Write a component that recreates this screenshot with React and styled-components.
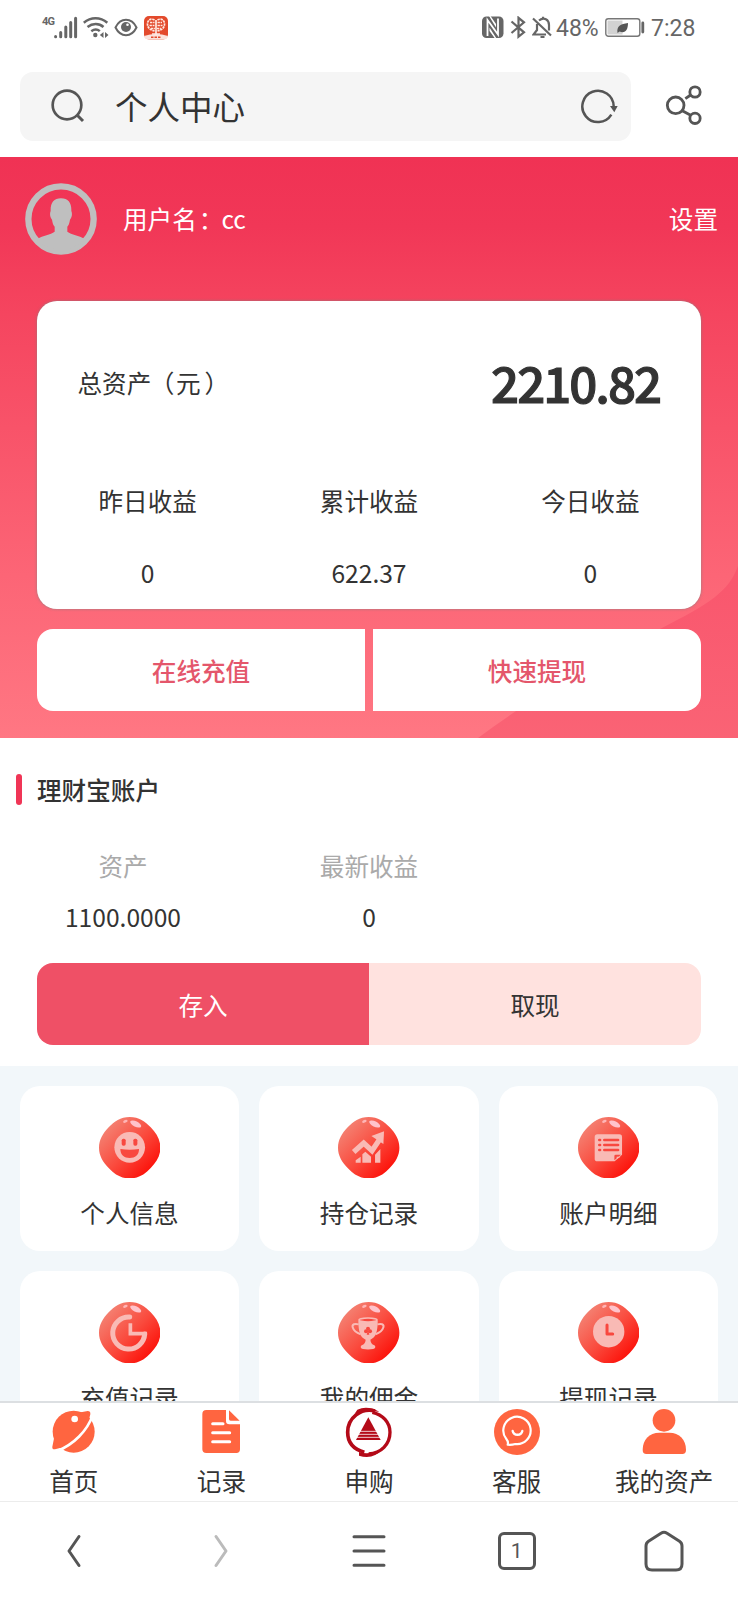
import React from 'react'
import styled, { createGlobalStyle } from 'styled-components'

const GlobalStyle = createGlobalStyle`
  * {
    box-sizing: border-box;
  }
  body {
    margin: 0;
    background: #fff;
    color: #333;
    font-family: "Noto Sans CJK SC", sans-serif;
    font-size: 24.6px;
  }
  svg {
    display: block;
    flex-shrink: 0;
  }
`

const Screen = styled.div`
  display: flex;
  flex-direction: column;
  width: 738px;
  height: 1600px;
  overflow: hidden;
`

/* phone status bar */

const StatusBar = styled.div`
  display: flex;
  justify-content: space-between;
  flex-shrink: 0;
  height: 56px;
  padding: 16px 43px 0 42px;
  color: #666;
  font-family: Roboto, sans-serif;
  font-size: 23px;
  line-height: 25px;
`

const StatusGroup = styled.div`
  display: flex;
  align-items: flex-start;
  height: 24px;
`

const Network = styled.span`
  width: 12px;
  font-size: 11px;
  font-weight: 700;
  line-height: 12px;
  letter-spacing: -0.8px;
`

const StatusText = styled.span`
  width: ${({ $width }) => $width}px;
  margin-left: ${({ $left }) => $left}px;
  white-space: nowrap;
`

const StatusSvg = styled.svg`
  margin-left: ${({ $left }) => $left || 0}px;
`

/* browser address bar */

const AddressBar = styled.div`
  display: flex;
  align-items: center;
  flex-shrink: 0;
  height: 101px;
  padding: 0 34px 0 20px;
`

const AddressField = styled.div`
  display: flex;
  align-items: center;
  width: 611px;
  height: 69px;
  margin-right: 34px;
  padding: 0 13px 2px 29.5px;
  border-radius: 13px;
  background: #f5f5f5;
`

const PageName = styled.div`
  flex: 1;
  margin-left: 29.5px;
  font-size: 32.5px;
  line-height: 60px;
`

const ShareIcon = styled.svg`
  margin-bottom: 3px;
`

/* page */

const Page = styled.main`
  flex: 1;
  min-height: 0;
  overflow: hidden;
`

const Hero = styled.section`
  position: relative;
  height: 580.5px;
  padding: 25.5px 37px 0;
  background: linear-gradient(#f03254 0%, #f13757 12%, #f5455f 27%, #fc6576 72%, #ff7783 100%);
`

const HeroCurve = styled.svg`
  position: absolute;
  right: 0;
  bottom: 0;
`

const UserRow = styled.div`
  display: flex;
  align-items: center;
  height: 72px;
  margin: 0 -17px 0 -12px;
  color: #fff;
`

const UserName = styled.div`
  flex: 1;
  margin: 0 0 1px 26px;
`

const Settings = styled.div`
  margin-bottom: 1px;
`

/* full-width punctuation, nudged towards the centre of its box */
const Punct = styled.span`
  margin-left: ${({ $shift }) => $shift}px;
  margin-right: ${({ $shift }) => -$shift}px;
`

const AssetCard = styled.div`
  position: relative;
  height: 308px;
  margin-top: 46.5px;
  border-radius: 20px;
  background: #fff;
  box-shadow: 0 0 3px rgba(130, 130, 130, 0.85);
`

const TotalRow = styled.div`
  display: flex;
  align-items: center;
  justify-content: space-between;
  height: 163px;
  padding: 0 41px 2px 40.5px;
  white-space: nowrap;
`

const TotalValue = styled.div`
  margin-bottom: 1px;
  font-size: 49.2px;
  font-weight: 500;
  letter-spacing: -2px;
  -webkit-text-stroke: 1.1px #333;
`

const Stats = styled.div`
  display: grid;
  grid-template-columns: repeat(3, 1fr);
  text-align: center;
  line-height: ${({ $line }) => $line}px;
`

const StatLabel = styled.div`
  color: ${({ $muted }) => ($muted ? '#aaa' : '#333')};
`

const ButtonRow = styled.div`
  position: relative;
  display: flex;
  gap: ${({ $gap }) => $gap || 0}px;
  height: 82px;
  margin-top: 20px;
`

const colors = {
  plain: { bg: '#fff', text: '#e4566b' },
  primary: { bg: '#ef5066', text: '#fff' },
  light: { bg: '#ffe2df', text: '#333' },
}

const Button = styled.button`
  flex: 1;
  padding: 0 0 1px;
  border: 0;
  background: ${({ $kind }) => colors[$kind].bg};
  color: ${({ $kind }) => colors[$kind].text};
  font: inherit;
  font-weight: ${({ $kind }) => ($kind === 'plain' ? 500 : 400)};
  &:first-child {
    border-radius: 16px 0 0 16px;
  }
  &:last-child {
    border-radius: 0 16px 16px 0;
  }
`

const Account = styled.section`
  height: 328.5px;
  padding-top: 36px;
  background: #fff;
  ${ButtonRow} {
    margin: 20.5px 37px 0;
  }
`

const SectionTitle = styled.h2`
  display: flex;
  align-items: center;
  height: 31px;
  margin: 0 0 35px 16px;
  font-size: 24.6px;
  font-weight: 500;
  line-height: 30px;
  &::before {
    content: "";
    width: 6px;
    height: 31px;
    margin-right: 15px;
    border-radius: 3px;
    background: #f03556;
  }
`

const Menu = styled.section`
  display: grid;
  grid-template-columns: repeat(3, 1fr);
  grid-auto-rows: 164.4px;
  gap: 20.4px;
  padding: 20.4px 20px;
  background: #f2f7fa;
`

const MenuItem = styled.div`
  display: flex;
  flex-direction: column;
  align-items: center;
  padding-top: 30.5px;
  border-radius: 20px;
  background: #fff;
`

const MenuLabel = styled.div`
  margin-top: 16px;
  line-height: 36px;
`

/* bottom bars */

const TabBar = styled.nav`
  display: grid;
  grid-template-columns: repeat(5, 1fr);
  flex-shrink: 0;
  height: 101px;
  padding-top: 4px;
  border-top: 2px solid #dcdfe2;
  border-bottom: 1px solid #ececec;
  background: #fff;
`

const Tab = styled.div`
  display: flex;
  flex-direction: column;
  align-items: center;
  line-height: 36px;
  svg {
    margin-bottom: 4px;
  }
`

const BrowserBar = styled.nav`
  display: grid;
  grid-template-columns: repeat(5, 1fr);
  place-items: center;
  flex-shrink: 0;
  height: 98px;
`

const WindowCount = styled.div`
  width: 38px;
  height: 38px;
  border: 3px solid #555;
  border-radius: 6px;
  color: #555;
  font-family: Roboto, sans-serif;
  font-size: 21px;
  line-height: 32px;
  text-align: center;
`

const Blob = ({ id, children }) => (
  <svg width="61.4" height="61.4" viewBox="0 0 184 184">
    <defs>
      <linearGradient id={id} x1="0.12" y1="0.15" x2="0.82" y2="0.85">
        <stop offset="0" stopColor="#f48273" />
        <stop offset="0.55" stopColor="#fa4a3d" />
        <stop offset="1" stopColor="#fc150d" />
      </linearGradient>
    </defs>
    <path
      fill={`url(#${id})`}
      d="M92 0c28 0 46 13 63 31s29 37 29 61-12 43-29 61-35 31-63 31-46-13-63-31S0 116 0 92s12-43 29-61S64 0 92 0z"
    />
    <ellipse cx="110" cy="21" rx="18" ry="8" fill="#ffc3cb" transform="rotate(26 110 21)" />
    <ellipse cx="79" cy="13" rx="7" ry="4" fill="#ffb5b5" transform="rotate(-20 79 13)" />
    {children}
  </svg>
)

const pale = '#f9bab5'
const hole = '#f8483f'

const menu = [
  {
    label: '个人信息',
    glyph: (
      <>
        <circle cx="92" cy="91" r="46" fill={pale} />
        <rect x="68" y="65" width="12" height="21" rx="5" fill={hole} />
        <rect x="103" y="65" width="12" height="21" rx="5" fill={hole} />
        <path d="M64 96q28 4 56 0c0 18-12 27-28 27s-28-9-28-27z" fill={hole} />
      </>
    ),
  },
  {
    label: '持仓记录',
    glyph: (
      <g fill={pale}>
        <path d="M47 105l30-27 25 23 23-34" fill="none" stroke={pale} strokeWidth="16" />
        <path d="M100 57l38-14-2 38z" />
        <path d="M53 137v-7l15-11v18zM73 137v-25l9-8 17 15v18zM111 137v-24l16-17v41z" />
      </g>
    ),
  },
  {
    label: '账户明细',
    glyph: (
      <>
        <path d="M58 52h66q8 0 8 8v53l-22 20H58q-8 0-8-8V60q0-8 8-8z" fill={pale} />
        <path d="M109 130v-13q0-4 4-4h16z" fill={hole} />
        <path d="M116 126v-7h12z" fill={pale} />
        <path d="M64 69h2M79 69h41M64 84h2M79 84h41M64 99h2M79 99h41" stroke={hole} strokeWidth="8" strokeLinecap="round" />
      </>
    ),
  },
  {
    label: '充值记录',
    glyph: (
      <>
        <path d="M92 45a48 48 0 1 0 45 51" fill="none" stroke={pale} strokeWidth="15" strokeLinecap="round" />
        <path d="M94 64v31h50" fill="none" stroke={pale} strokeWidth="11" />
      </>
    ),
  },
  {
    label: '我的佣金',
    glyph: (
      <>
        <path d="M61 56c0 32 5 49 22 57-1 9-4 13-12 17-5 4-3 10 4 11 10 2 20 2 30 0 7-1 9-7 4-11-8-4-11-8-12-17 17-8 22-25 22-57z" fill={pale} />
        <ellipse cx="90" cy="54" rx="27" ry="6" fill={hole} stroke={pale} strokeWidth="5" />
        <path d="M62 67c-11-3-21-1-18 9 3 11 10 16 24 21M118 67c11-3 21-1 18 9-3 11-10 16-24 21" fill="none" stroke={pale} strokeWidth="6" />
        <g fill={hole}>
          <circle cx="90" cy="80" r="6" />
          <circle cx="84" cy="88" r="6" />
          <circle cx="96" cy="88" r="6" />
          <path d="M90 84l4 14h-8z" />
        </g>
      </>
    ),
  },
  {
    label: '提现记录',
    glyph: (
      <>
        <circle cx="92" cy="89" r="47" fill={pale} />
        <path d="M87 69v27h17" fill="none" stroke={hole} strokeWidth="9" strokeLinecap="round" strokeLinejoin="round" />
      </>
    ),
  },
]

const tabs = [
  {
    label: '首页',
    icon: (
      <g transform="translate(-147 -51)">
        <circle cx="221" cy="125" r="63" fill="#ff6540" />
        <path fill="#ff6540" d="M235 68l28-5q9 0 8 10l-6 22zM163 140l-6 30q-1 9 8 8l24-6z" />
        <path fill="none" stroke="#fff" strokeWidth="8" d="M279 74C262 122 222 164 168 185" />
        <circle cx="224" cy="87" r="10" fill="#fff" />
      </g>
    ),
  },
  {
    label: '记录',
    icon: (
      <g transform="translate(-590 -51)">
        <path fill="#ff6540" d="M621 60h59v33q0 10 10 10h32v75q0 11-11 11h-90q-12 0-12-11V72q0-12 12-12z" />
        <path fill="#ff6540" d="M689 61l32 31h-27q-5 0-5-5z" />
        <path d="M640 101h31M640 128h51M640 155h51" stroke="#fff" strokeWidth="9" strokeLinecap="round" />
      </g>
    ),
  },
  {
    label: '申购',
    icon: (
      <g transform="translate(-1033 -49)">
        <path fill="none" stroke="#b40a18" strokeWidth="11" d="M1126 61C1084 50 1044 82 1044 125c0 30 17 51 50 60" />
        <path fill="none" stroke="#b40a18" strokeWidth="10" d="M1118 65c31 7 53 30 53 60 0 36-27 63-64 65" />
        <path fill="#b40a18" d="M1073 57q30-14 66 6l-24-1q-30-4-50 7zM1078 184q32 12 72-11-30 37-72 22z" />
        <path fill="#b40a18" d="M1106 80l37 68h-74z" />
        <path d="M1070 122h72M1070 131h72M1070 140h76" stroke="#fff" strokeWidth="2.4" />
      </g>
    ),
  },
  {
    label: '客服',
    icon: (
      <g transform="translate(-372 -51)">
        <circle cx="447" cy="126" r="69" fill="#ff6540" />
        <path d="M415 147a41 41 0 1 1 27 15c-7 2-15 3-23 2 2-6 1-11-4-17z" fill="none" stroke="#fff" strokeWidth="6.5" strokeLinejoin="round" />
        <path d="M434 123c3 15 26 15 29 0" fill="none" stroke="#fff" strokeWidth="7" strokeLinecap="round" />
      </g>
    ),
  },
  {
    label: '我的资产',
    icon: (
      <g transform="translate(-813 -51)" fill="#ff6540">
        <circle cx="888" cy="91" r="34" />
        <path d="M824 180c0-31 20-52 50-52h30c30 0 50 21 50 52q0 12-11 12H835q-11 0-11-12z" />
      </g>
    ),
  },
]

const stats = [
  ['昨日收益', '0'],
  ['累计收益', '622.37'],
  ['今日收益', '0'],
]

function PhoneStatus() {
  return (
    <StatusBar>
      <StatusGroup>
        <Network>4G</Network>
        <StatusSvg width="24" height="24" viewBox="0 0 24 24" stroke="#666" strokeWidth="3" strokeLinecap="round">
          <path d="M1.600 20.500v.3M6.700 16.500v4.300M11.800 11v9.800M16.700 6.500v14.300M21.600 2.300v18.500" />
        </StatusSvg>
        <StatusSvg $left={5} width="26" height="24" viewBox="0 0 26 24" fill="none" stroke="#666" strokeWidth="2.5">
          <path d="M.8 6.800c7-6 16.500-6 23.500 0M4.500 11c5-4 11.500-4 16 0M8.300 15.200c3-2.300 6-2.300 8.500 0" />
          <circle cx="12.300" cy="19" r="2.200" fill="#666" stroke="none" />
          <path d="M20.500 16v6l-3.700-3zM22 16v6l3.500-3z" fill="#666" stroke="none" />
        </StatusSvg>
        <StatusSvg $left={5} width="24" height="24" viewBox="0 0 23 24">
          <path d="M1 11.500C6 1.300 17 1.300 22 11.500 17 21.700 6 21.700 1 11.500z" fill="none" stroke="#666" strokeWidth="2" />
          <circle cx="11.500" cy="11" r="5" fill="#666" />
          <circle cx="13" cy="8.800" r="1.300" fill="#fff" />
        </StatusSvg>
        <StatusSvg $left={6} width="24" height="24" viewBox="0 0 24 24">
          <rect width="24" height="23.500" rx="5" fill="#e34a2c" />
          <path d="M0 20q12-4 24 0-.5 3.500-5 3.500H5Q.5 23.500 0 20z" fill="#fbe3dc" />
          <g stroke="#ffe9e2" strokeWidth="1.700" fill="none" strokeDasharray="2.400 .7">
            <path d="M10.500 4C7 2 3.500 4 3.500 8s3 6 7 7M13.500 4C17 2 20.500 4 20.500 8s-3 6-7 7" />
            <path d="M6 6.500h4.500M5.500 9.500h5M7 12.500h4M13.500 6.500H18M13.500 9.500h5M13 12.500h4" />
            <path d="M12 4v15M8 18h8" strokeDasharray="none" />
          </g>
          <path d="M7 21.300h10" stroke="#e34a2c" strokeWidth="1.500" strokeDasharray="2.500 1" />
        </StatusSvg>
      </StatusGroup>
      <StatusGroup>
        <StatusSvg width="22" height="23" viewBox="0 0 22 23">
          <rect y=".5" width="21.500" height="21.500" rx="4.500" fill="#666" />
          <path d="M5.500 20V4l10.500 14.500V2.500" fill="none" stroke="#fff" strokeWidth="1.800" />
          <path d="M7 0h1.500L14 8v3.500zM14.500 22.500H13L7.500 15v-3.500z" fill="#fff" />
        </StatusSvg>
        <StatusSvg $left={6} width="16" height="23" viewBox="0 0 16 23" fill="none" stroke="#666" strokeWidth="2.2">
          <path d="M1.500 5.500L14 16.300l-5.500 4.400V1.800L14 6.300 1.500 17" />
        </StatusSvg>
        <StatusSvg $left={6} width="21" height="23" viewBox="0 0 21 23" fill="none" stroke="#666" strokeWidth="2.2">
          <path d="M1 2.500l18 17M5 8v6l-3.500 4.500H14M7 4.500c5-4 10-1 10 4.500v5.500M8.500 21h4M11 3V.8" />
        </StatusSvg>
        <StatusText $left={3} $width={42}>48%</StatusText>
        <StatusSvg $left={7} width="40" height="24" viewBox="0 0 40 24">
          <rect x=".8" y="2.800" width="34" height="17.500" rx="2.500" fill="#fff" stroke="#777" strokeWidth="1.400" />
          <path d="M2.500 4.500h15v14h-15z" fill="#d2d2d2" />
          <path d="M12.500 17c-1-7 3-9 10.500-10 0 7-3 11-8.500 8.500z" fill="#555" />
          <path d="M37.800 7v9" stroke="#666" strokeWidth="2.800" strokeLinecap="round" />
        </StatusSvg>
        <StatusText $left={6} $width={44}>7:28</StatusText>
      </StatusGroup>
    </StatusBar>
  )
}

function Address() {
  return (
    <AddressBar>
      <AddressField>
        <svg width="36" height="36" viewBox="0 0 108 108" fill="none" stroke="#555" strokeWidth="8">
          <circle cx="51" cy="51" r="43" />
          <path d="M81 81l18 18" strokeWidth="9" />
        </svg>
        <PageName>个人中心</PageName>
        <svg width="38" height="36" viewBox="0 0 114 108" fill="none" stroke="#555" strokeWidth="7.5">
          <path d="M94 80A47 47 0 1 1 101 54" />
          <path d="M90 54h23l-10 19z" fill="#555" stroke="none" />
        </svg>
      </AddressField>
      <ShareIcon width="37" height="40" viewBox="0 0 111 120" fill="none" stroke="#555" strokeWidth="8.5">
        <circle cx="32" cy="61" r="25" />
        <circle cx="90" cy="21" r="15.500" />
        <circle cx="90" cy="100" r="15.500" />
        <path d="M61 41l16-11M52 77l25 14" />
      </ShareIcon>
    </AddressBar>
  )
}

function App() {
  return (
    <>
      <GlobalStyle />
      <Screen>
        <PhoneStatus />
        <Address />
        <Page>
          <Hero>
            <HeroCurve width="260" height="172" viewBox="0 0 260 172">
              <defs>
                <linearGradient id="curve" x1="0" y1="0" x2="0" y2="1">
                  <stop offset="0" stopColor="#f9566d" />
                  <stop offset="1" stopColor="#fa6375" />
                </linearGradient>
              </defs>
              <path d="M260 0c-9 25-27 37-78 63C130 90 58 128 0 172h260z" fill="url(#curve)" />
            </HeroCurve>
            <UserRow>
              <svg width="72" height="72" viewBox="0 0 216 216" fill="#bfbfbf">
                <circle cx="108" cy="108" r="98" fill="none" stroke="#bfbfbf" strokeWidth="19" />
                <path d="M108 46c22 0 32 14 31 38 4 10 1 20-4 26-2 11-4 17-8 21v15c12 9 36 12 51 21l-8 14a98 98 0 0 1-124 0l-8-14c15-9 39-12 51-21v-15c-4-4-6-10-8-21-5-6-8-16-4-26-1-24 9-38 31-38z" />
                <path d="M34 170q74 60 148 0l-16 26q-58 34-116 0z" />
              </svg>
              <UserName>
                用户名<Punct $shift={2}>：</Punct>cc
              </UserName>
              <Settings>设置</Settings>
            </UserRow>
            <AssetCard>
              <TotalRow>
                <div>
                  总资产<Punct $shift={-1.5}>（</Punct>元<Punct $shift={4}>）</Punct>
                </div>
                <TotalValue>2210.82</TotalValue>
              </TotalRow>
              <Stats $line={72}>
                {stats.map(([label, value]) => (
                  <div key={label}>
                    <StatLabel>{label}</StatLabel>
                    <div>{value}</div>
                  </div>
                ))}
              </Stats>
            </AssetCard>
            <ButtonRow $gap={8}>
              <Button $kind="plain">在线充值</Button>
              <Button $kind="plain">快速提现</Button>
            </ButtonRow>
          </Hero>
          <Account>
            <SectionTitle>理财宝账户</SectionTitle>
            <Stats $line={51.5}>
              <div>
                <StatLabel $muted>资产</StatLabel>
                <div>1100.0000</div>
              </div>
              <div>
                <StatLabel $muted>最新收益</StatLabel>
                <div>0</div>
              </div>
            </Stats>
            <ButtonRow>
              <Button $kind="primary">存入</Button>
              <Button $kind="light">取现</Button>
            </ButtonRow>
          </Account>
          <Menu>
            {menu.map(({ label, glyph }, i) => (
              <MenuItem key={label}>
                <Blob id={`blob${i}`}>{glyph}</Blob>
                <MenuLabel>{label}</MenuLabel>
              </MenuItem>
            ))}
          </Menu>
        </Page>
        <TabBar>
          {tabs.map(({ label, icon }) => (
            <Tab key={label}>
              <svg width="50" height="51" viewBox="0 0 150 153">{icon}</svg>
              {label}
            </Tab>
          ))}
        </TabBar>
        <BrowserBar>
          <svg width="16" height="34" viewBox="0 0 16 34" fill="none" stroke="#555" strokeWidth="3" strokeLinecap="round" strokeLinejoin="round">
            <path d="M13 2.500L3 17l10 14.500" />
          </svg>
          <svg width="16" height="34" viewBox="0 0 16 34" fill="none" stroke="#bbb" strokeWidth="3" strokeLinecap="round" strokeLinejoin="round">
            <path d="M3 2.500L13 17 3 31.500" />
          </svg>
          <svg width="34" height="34" viewBox="0 0 34 34" stroke="#555" strokeWidth="3" strokeLinecap="round">
            <path d="M2 2.700h30M2 17h30M2 31.300h30" />
          </svg>
          <WindowCount>1</WindowCount>
          <svg width="40" height="42" viewBox="0 0 40 42" fill="none" stroke="#555" strokeWidth="3" strokeLinejoin="round">
            <path d="M17 3.200q3-1.800 6 0l12.500 8q2.500 1.700 2.500 4.800V34q0 6-6 6H8q-6 0-6-6V16q0-3.100 2.500-4.800z" />
          </svg>
        </BrowserBar>
      </Screen>
    </>
  )
}

export default App
